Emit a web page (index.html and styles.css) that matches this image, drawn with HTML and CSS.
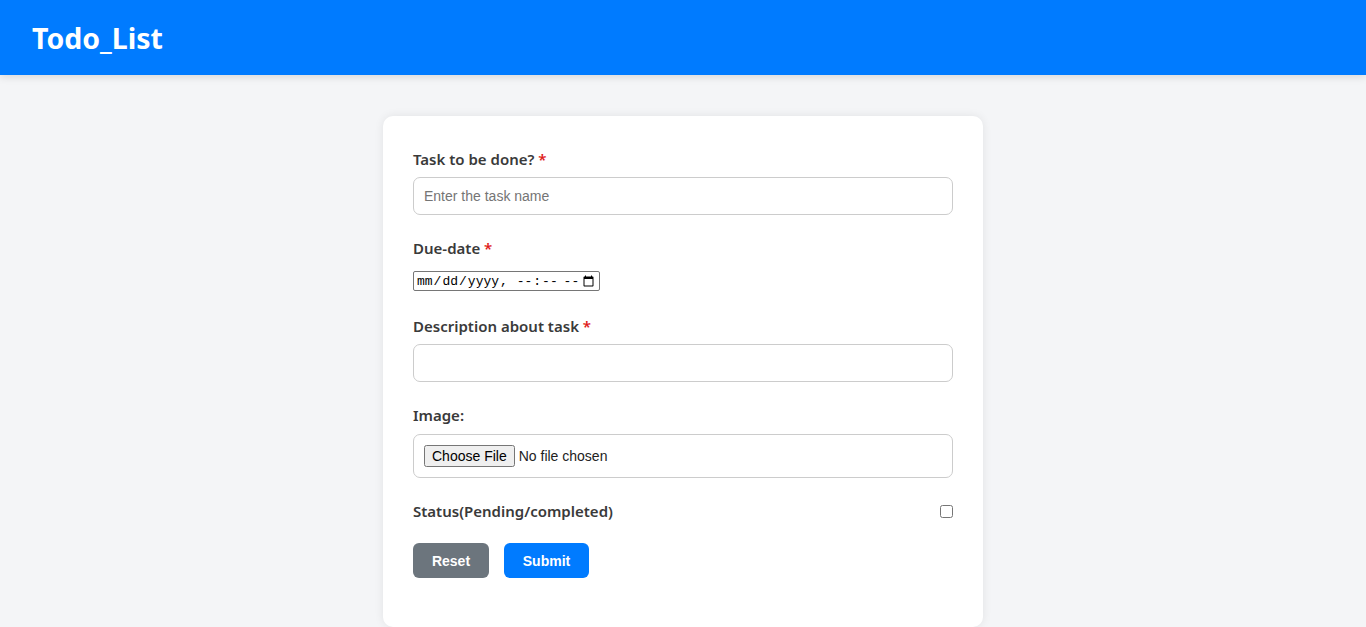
FILE: index.html
```html
<!DOCTYPE html>
<html lang="en">
<head>
<meta charset="utf-8">
<title>Todo_List</title>
<link rel="stylesheet" href="styles.css">
</head>
<body>
<header class="topbar">
  <h1 class="brand">Todo_List</h1>
</header>
<main class="page">
  <form class="card">
    <div class="field">
      <label class="label">Task to be done? <span class="req">*</span></label>
      <input class="text-input" type="text" placeholder="Enter the task name">
    </div>
    <div class="field field-date">
      <label class="label">Due-date <span class="req">*</span></label>
      <input class="date-input" type="datetime-local">
    </div>
    <div class="field">
      <label class="label">Description about task <span class="req">*</span></label>
      <input class="text-input" type="text">
    </div>
    <div class="field field-file">
      <label class="label">Image:</label>
      <div class="file-box"><input class="file-input" type="file"></div>
    </div>
    <div class="status-row">
      <label class="label">Status(Pending/completed)</label>
      <input class="check" type="checkbox">
    </div>
    <div class="actions">
      <button type="reset" class="btn btn-reset">Reset</button>
      <button type="button" class="btn btn-submit">Submit</button>
    </div>
  </form>
</main>
</body>
</html>
```
FILE: styles.css
```css
* { box-sizing: border-box; }
html, body { margin: 0; padding: 0; }
body {
  background: #f4f5f7;
  font-family: "Noto Sans", "Open Sans", sans-serif;
  color: #333;
}
.topbar {
  height: 75px;
  background: #007bff;
  display: flex;
  align-items: center;
  padding-left: 32px;
  box-shadow: 0 2px 8px rgba(0,0,0,0.12);
  position: relative;
}
.brand {
  margin: 0;
  color: #fff;
  font-size: 28.5px;
  font-weight: 700;
}
.page {
  display: flex;
  justify-content: center;
  padding-top: 41px;
}
.card {
  width: 600px;
  background: #fff;
  border-radius: 10px;
  padding: 30px 30px 49px;
  box-shadow: 0 0 10px rgba(0,0,0,0.08);
}
.field { display: flex; flex-direction: column; margin-bottom: 20px; }
.label {
  font-size: 15px;
  font-weight: 600;
  line-height: 26px;
  height: 26px;
  margin-bottom: 5px;
  color: #3a3a3a;
}
.req { color: #e01b1b; }
.text-input {
  height: 38px;
  border: 1px solid #cccccc;
  border-radius: 7px;
  padding: 0 10px;
  font-family: "Liberation Sans", Arial, sans-serif;
  font-size: 14px;
  color: #333;
  outline: none;
}
.text-input::placeholder { color: #757575; }
.field-date .label { margin-bottom: 10px; }
.field-date { margin-bottom: 22px; align-items: flex-start; }
.date-input {
  width: 187px;
  height: 20px;
  font-family: "Liberation Mono", monospace;
  font-size: 13px;
  padding: 0 2px;
  border: 1px solid #767676;
  border-radius: 2px;
  color: #000;
}
.field-file .label { margin-bottom: 6px; }
.file-box {
  height: 44px;
  border: 1px solid #cccccc;
  border-radius: 7px;
  padding: 0 10px;
  display: flex;
  align-items: center;
}
.file-input {
  font-family: "Liberation Sans", Arial, sans-serif;
  font-size: 14px;
  color: #222;
}
.status-row {
  display: flex;
  justify-content: space-between;
  align-items: center;
  height: 26px;
  margin-bottom: 19px;
}
.status-row .label { margin-bottom: 0; }
.check { margin: 0; width: 13px; height: 13px; }
.actions { display: flex; gap: 15px; }
.btn {
  height: 35px;
  border: none;
  border-radius: 6px;
  color: #fff;
  font-family: "Liberation Sans", Arial, sans-serif;
  font-weight: 700;
  font-size: 14px;
  cursor: pointer;
}
.btn-reset { background: #6c757d; width: 76px; }
.btn-submit { background: #007bff; width: 85px; }
```
